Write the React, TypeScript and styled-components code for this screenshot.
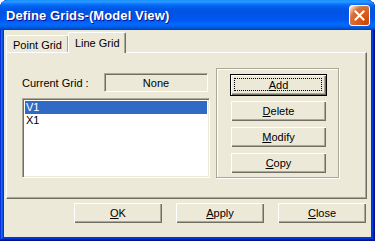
import styled, { createGlobalStyle } from 'styled-components';

const GlobalStyle = createGlobalStyle`
	html, body {
		margin: 0;
		padding: 0;
		background: #ffffff;
	}
	* {
		box-sizing: border-box;
	}
`;

const Face = '#ECE9D8';
const Shadow = '#ACA899';
const DarkShadow = '#716F64';

const Window = styled.div`
	width: 375px;
	height: 241px;
	display: flex;
	flex-direction: column;
	border-radius: 8px 8px 0 0;
	overflow: hidden;
	background: #0831d9;
	box-shadow: inset -1px -1px #00138c, inset 1px 1px #0831d9, inset -2px -2px #001ea0,
		inset 2px 2px #166aee, inset -3px -3px #003bda, inset 3px 3px #0855dd;
	font-family: 'Liberation Sans', Arial, sans-serif;
	font-size: 11px;
	color: #000;
`;

const TitleBar = styled.div`
	height: 30px;
	flex-shrink: 0;
	display: flex;
	align-items: center;
	justify-content: space-between;
	padding: 0 5px 0 6px;
	background: linear-gradient(
		180deg,
		#0997ff 0%,
		#3593ff 4%,
		#288eff 8%,
		#127dff 12%,
		#036ffc 16%,
		#0262ee 22%,
		#0057e5 30%,
		#0054e3 40%,
		#0055eb 60%,
		#005bf5 70%,
		#026afe 80%,
		#0062ef 88%,
		#0052d6 94%,
		#0040ab 100%
	);
`;

const Title = styled.div`
	color: #fff;
	font-weight: bold;
	font-size: 13px;
	letter-spacing: 0.1px;
	text-shadow: 1px 1px #0f1089;
	padding-top: 1px;
`;

const CloseButton = styled.div`
	width: 21px;
	height: 21px;
	display: flex;
	align-items: center;
	justify-content: center;
	border: 1px solid #fff;
	border-radius: 3px;
	background: radial-gradient(
		circle at 90% 90%,
		#cc4600 0%,
		#dc6527 55%,
		#cd7546 70%,
		#ffccb2 90%,
		#fff 100%
	);
	margin-top: 1px;
`;

const Body = styled.div`
	flex: 1;
	margin: 0 4px 4px 4px;
	background: ${Face};
	display: flex;
	flex-direction: column;
`;

const TabStrip = styled.div`
	display: flex;
	align-items: flex-end;
	height: 22px;
	padding-left: 2px;
	position: relative;
	z-index: 1;
`;

const Tab = styled.div<{ $active?: boolean }>`
	height: ${(p) => (p.$active ? 21 : 17)}px;
	margin-bottom: ${(p) => (p.$active ? -1 : 0)}px;
	margin-left: ${(p) => (p.$active ? -1 : 0)}px;
	padding: ${(p) => (p.$active ? '4px 5px 0 6px' : '3px 6px 0 6px')};
	background: ${Face};
	border-top: 1px solid #fff;
	border-left: 1px solid #fff;
	border-right: 1px solid ${DarkShadow};
	box-shadow: inset -1px 0 ${Shadow};
	border-radius: 2px 2px 0 0;
	white-space: nowrap;
`;

const Panel = styled.div`
	height: 147px;
	margin: 0 4px 0 2px;
	border-top: 1px solid #fff;
	border-left: 1px solid #fff;
	border-right: 1px solid ${DarkShadow};
	border-bottom: 1px solid ${DarkShadow};
	box-shadow: inset -1px -1px ${Shadow};
	display: flex;
	align-items: flex-start;
	gap: 6px;
	padding: 15px 0 0 15px;
`;

const LeftColumn = styled.div`
	width: 188px;
	margin-top: 5px;
	display: flex;
	flex-direction: column;
	gap: 6px;
`;

const CurrentRow = styled.div`
	display: flex;
	align-items: center;
	justify-content: space-between;
	padding-right: 2px;
`;

const Label = styled.span`
	padding-top: 1px;
`;

const StaticBox = styled.div`
	width: 104px;
	height: 19px;
	display: flex;
	align-items: center;
	justify-content: center;
	border-top: 1px solid ${Shadow};
	border-left: 1px solid ${Shadow};
	border-right: 1px solid #fff;
	border-bottom: 1px solid #fff;
	box-shadow: inset 1px 1px ${DarkShadow};
`;

const ListBox = styled.div`
	height: 80px;
	background: #fff;
	border-top: 1px solid ${Shadow};
	border-left: 1px solid ${Shadow};
	border-right: 1px solid #fff;
	border-bottom: 1px solid #fff;
	box-shadow: inset 1px 1px ${DarkShadow}, inset -1px -1px ${Face};
	padding: 2px;
`;

const ListItem = styled.div<{ $selected?: boolean }>`
	height: 13px;
	line-height: 13px;
	padding-left: 1px;
	background: ${(p) => (p.$selected ? '#316AC5' : 'transparent')};
	color: ${(p) => (p.$selected ? '#fff' : '#000')};
`;

const GroupBox = styled.div`
	width: 123px;
	height: 110px;
	border: 1px solid ${Shadow};
	box-shadow: 1px 1px #fff, inset 1px 1px #fff;
	display: flex;
	flex-direction: column;
	gap: 4px;
	padding: 5px 0 0 13px;
`;

const Button = styled.div<{ $default?: boolean; $width: number }>`
	width: ${(p) => p.$width}px;
	height: 22px;
	display: flex;
	align-items: center;
	justify-content: center;
	background: ${Face};
	border: 1px solid ${(p) => (p.$default ? '#000' : 'transparent')};
	box-shadow: inset 1px 1px #fff, inset -1px -1px ${DarkShadow}, inset -2px -2px ${Shadow};
	position: relative;
	padding-bottom: 1px;

	u {
		text-decoration: underline;
		text-underline-offset: 1px;
	}
`;

const FocusRect = styled.span`
	position: absolute;
	left: 3px;
	top: 3px;
	right: 4px;
	bottom: 4px;
	border: 1px dotted #000;
`;

const Footer = styled.div`
	display: flex;
	justify-content: flex-end;
	gap: 12px;
	margin-top: 3px;
	padding-right: 4px;
`;

const CloseIcon = () => (
	<svg width="11" height="11" viewBox="0 0 11 11">
		<path d="M1.5 1.5 L9.5 9.5 M9.5 1.5 L1.5 9.5" stroke="#fff" strokeWidth="2" strokeLinecap="square" />
	</svg>
);

export default function App() {
	return (
		<>
			<GlobalStyle />
			<Window>
				<TitleBar>
					<Title>{'Define Grids-(Model View)'}</Title>
					<CloseButton>
						<CloseIcon />
					</CloseButton>
				</TitleBar>
				<Body>
					<TabStrip>
						<Tab>{'Point Grid'}</Tab>
						<Tab $active>{'Line Grid'}</Tab>
					</TabStrip>
					<Panel>
						<LeftColumn>
							<CurrentRow>
								<Label>{'Current Grid :'}</Label>
								<StaticBox>{'None'}</StaticBox>
							</CurrentRow>
							<ListBox>
								<ListItem $selected>{'V1'}</ListItem>
								<ListItem>{'X1'}</ListItem>
							</ListBox>
						</LeftColumn>
						<GroupBox>
							<Button $width={97} $default>
								<FocusRect />
								<u>A</u>dd
							</Button>
							<Button $width={97}>
								<u>D</u>elete
							</Button>
							<Button $width={97}>
								<u>M</u>odify
							</Button>
							<Button $width={97}>
								<u>C</u>opy
							</Button>
						</GroupBox>
					</Panel>
					<Footer>
						<Button $width={90}>
							<u>O</u>K
						</Button>
						<Button $width={90}>
							<u>A</u>pply
						</Button>
						<Button $width={90}>
							<u>C</u>lose
						</Button>
					</Footer>
				</Body>
			</Window>
		</>
	);
}
